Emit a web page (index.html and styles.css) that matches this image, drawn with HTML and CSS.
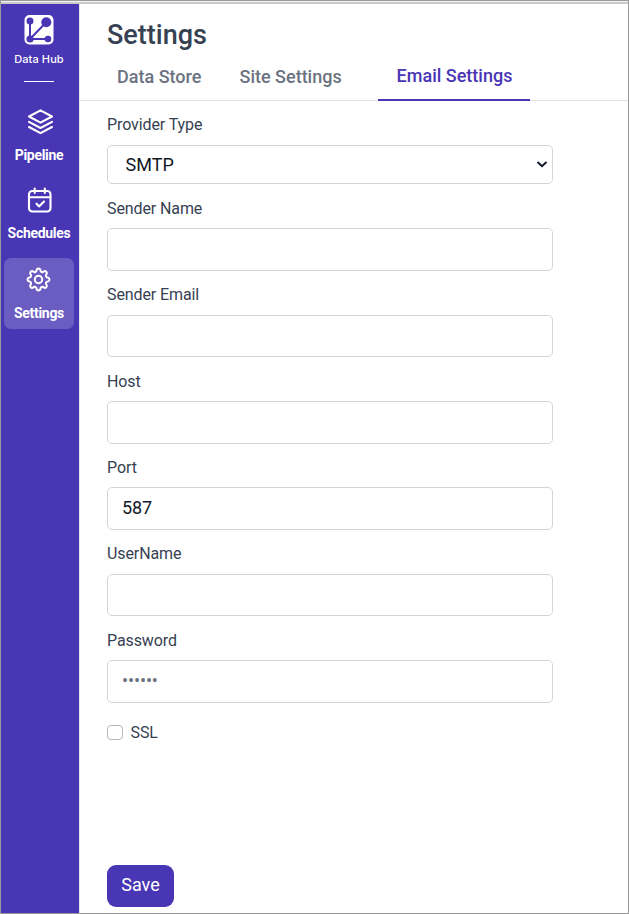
FILE: index.html
```html
<!DOCTYPE html>
<html lang="en">
<head>
<meta charset="utf-8">
<title>Data Hub - Settings</title>
<link rel="stylesheet" href="styles.css">
</head>
<body>
<div class="window">
  <div class="topline"></div>
  <div class="app">
    <nav class="sidebar">
      <div class="brand">
        <svg width="30" height="30" viewBox="0 0 30 30">
          <rect x="0.5" y="0" width="29" height="29.500" rx="5" fill="#fff"/>
          <g stroke="#4936b4" stroke-width="2" fill="none"><path d="M6 6V24H24M6 24L22 7.500"/></g>
          <g fill="#4936b4"><circle cx="6" cy="6" r="3.500"/><circle cx="22.300" cy="7.300" r="5"/><circle cx="6" cy="24" r="3.600"/><circle cx="24" cy="24" r="3.300"/></g>
        </svg>
        <span>Data Hub</span>
      </div>
      <div class="divider"></div>
      <a class="nav pipeline">
        <svg width="28" height="28" viewBox="0 0 28 28" fill="none" stroke="#fff" stroke-width="2.100" stroke-linejoin="round" stroke-linecap="round"><path d="M13.500 2.300L25 8.500L13.500 14.700L2 8.500ZM2 13.800L13.500 20L25 13.800M2 19L13.500 25.200L25 19"/></svg>
        <span>Pipeline</span>
      </a>
      <a class="nav schedules">
        <svg width="28" height="28" viewBox="0 0 28 28" fill="none" stroke="#fff" stroke-width="2.100" stroke-linejoin="round" stroke-linecap="round"><rect x="3" y="5" width="21.500" height="20.500" rx="3.200"/><path d="M3 11.300H24.500M8.700 2.500V7M18.800 2.500V7M10.500 17.700L13 20.400L18 15.400"/></svg>
        <span>Schedules</span>
      </a>
      <a class="nav settings active">
        <svg width="28" height="28" viewBox="-14 -14 28 28" fill="none" stroke="#fff" stroke-width="2" stroke-linejoin="round"><g transform="translate(-0.500 -0.500)"><path d="M9.600 -1.900A2 2 0 0 1 9.600 1.900A2 2 0 0 0 8.130 5.440A2 2 0 0 1 5.440 8.130A2 2 0 0 0 1.900 9.600A2 2 0 0 1 -1.900 9.600A2 2 0 0 0 -5.440 8.130A2 2 0 0 1 -8.130 5.440A2 2 0 0 0 -9.600 1.900A2 2 0 0 1 -9.600 -1.900A2 2 0 0 0 -8.130 -5.440A2 2 0 0 1 -5.440 -8.130A2 2 0 0 0 -1.900 -9.600A2 2 0 0 1 1.900 -9.600A2 2 0 0 0 5.440 -8.130A2 2 0 0 1 8.130 -5.440A2 2 0 0 0 9.600 -1.900Z"/><circle r="3.700"/></g></svg>
        <span>Settings</span>
      </a>
    </nav>
    <main class="content">
      <h1>Settings</h1>
      <div class="tabs">
        <a class="tab store">Data Store</a>
        <a class="tab site">Site Settings</a>
        <a class="tab current">Email Settings</a>
      </div>
      <form class="form">
        <div class="field provider">
          <label for="provider">Provider Type</label>
          <div class="select-wrap">
            <select id="provider"><option>SMTP</option></select>
            <svg class="chevron" width="12" height="8" viewBox="0 0 12 8" fill="none" stroke="#111827" stroke-width="2"><path d="M1.500 1L6 5.200L10.500 1"/></svg>
          </div>
        </div>
        <div class="field"><label for="name">Sender Name</label><input id="name" type="text"></div>
        <div class="field"><label for="email">Sender Email</label><input id="email" type="text"></div>
        <div class="field"><label for="host">Host</label><input id="host" type="text"></div>
        <div class="field"><label for="port">Port</label><input id="port" type="text" value="587"></div>
        <div class="field"><label for="user">UserName</label><input id="user" type="text"></div>
        <div class="field"><label for="pass">Password</label><input id="pass" type="text" placeholder="••••••"></div>
        <label class="check"><input type="checkbox"><span>SSL</span></label>
        <button type="button">Save</button>
      </form>
    </main>
  </div>
</div>
</body>
</html>
```
FILE: styles.css
```css
* { box-sizing: border-box; }
body { margin: 0; font-family: Roboto, "Liberation Sans", sans-serif; color: #364152; background: #fff; }
.window { width: 629px; height: 914px; border: 1px solid #999; display: flex; flex-direction: column; overflow: hidden; }
.topline { height: 3px; border-top: 1px solid #f4f2f4; background: #cdcacd; flex: none; }
.app { flex: 1; display: flex; min-height: 0; }

.sidebar { width: 79px; flex: none; background: #4936b4; border-right: 1px solid #e5e7eb; color: #fff; display: flex; flex-direction: column; padding-top: 11px; }
.brand { width: 76px; display: flex; flex-direction: column; align-items: center; font-size: 11px; font-weight: 500; line-height: 14px; letter-spacing: 0.1px; font-family: Inter, Roboto, sans-serif; }
.brand span { margin-top: 7px; white-space: nowrap; }
.divider { width: 30px; height: 1px; margin: 15px 0 0 23px; background: #fff; }
.nav { width: 70px; margin-left: 3px; display: flex; flex-direction: column; align-items: center; font-size: 14px; font-weight: 700; line-height: 18px; letter-spacing: -0.3px; border-radius: 7px; }
.nav svg { display: block; }
.pipeline { margin-top: 26px; height: 56px; }
.pipeline svg { margin-left: 3px; }
.nav span { margin-top: 10px; }
.schedules { margin-top: 22px; height: 57px; }
.schedules svg { margin-left: 2px; }
.settings { margin-top: 15px; height: 71px; padding-top: 8px; }
.settings span { margin-top: 10px; }
.active { background: #6b5cc2; }

.content { flex: 1; min-width: 0; }
h1 { margin: 13px 0 0 27px; font-size: 27px; font-weight: 500; line-height: 36px; }
.tabs { height: 48px; border-bottom: 1px solid #dfe1e8; display: flex; font-size: 18px; font-weight: 500; line-height: 24px; color: #6b7280; }
.tab { height: 48px; padding-top: 12px; white-space: nowrap; }
.store { margin-left: 37px; width: 122.5px; }
.site { width: 138.5px; }
.current { width: 152px; padding: 11px 0 0 1px; text-align: center; color: #4936b4; border-bottom: 2px solid #4936b4; }

.form { padding: 11px 0 0 27px; }
.field { width: 446px; height: 86.4px; display: flex; flex-direction: column; }
.field label { margin-top: 0.75px; font-size: 16px; line-height: 24px; letter-spacing: -0.1px; }
.field > input { height: 42.5px; margin-top: 7.5px; border: 1px solid #d1d5db; border-radius: 5px; padding: 0 14px 2px; font: 18px Roboto, sans-serif; letter-spacing: -0.1px; color: #111827; background: #fff; outline: 0; }
.field > input::placeholder { color: #6b7280; opacity: 1; }
.provider { height: 84px; }
.select-wrap { position: relative; margin-top: 8.25px; height: 39px; }
select { appearance: none; width: 100%; height: 39px; border: 1px solid #d1d5db; border-radius: 5px; padding: 0 17.5px; font: 18px Roboto, sans-serif; color: #111827; background: #fff; }
.chevron { position: absolute; right: 5px; top: 16px; }
.check { display: flex; align-items: center; gap: 7.5px; width: 80px; height: 24px; margin-top: 6px; font-size: 16px; letter-spacing: -0.1px; }
.check input { appearance: none; width: 16px; height: 15px; margin: 0; border: 1px solid #b5b7bb; border-radius: 4px; background: #fff; }
button { display: block; width: 67px; height: 42px; margin-top: 121px; padding: 0 0 3.5px; border: 0; border-radius: 9px; background: #4936b4; color: #fff; font: 18px Roboto, sans-serif; }
```
